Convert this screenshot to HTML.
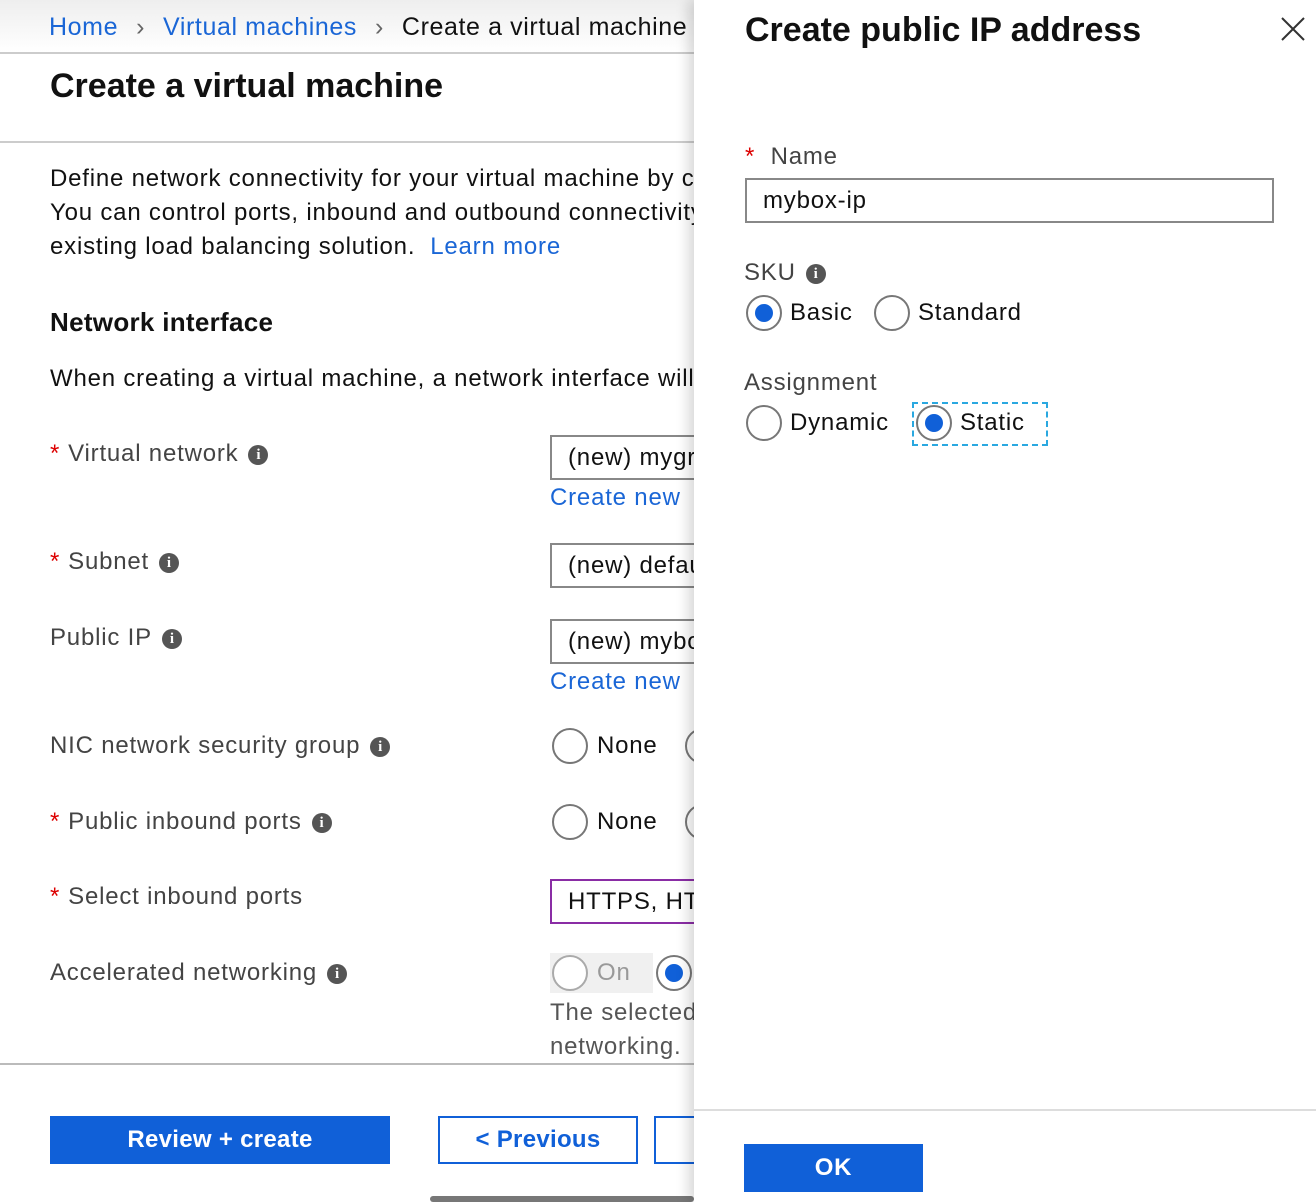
<!DOCTYPE html><html><head><style>
*{margin:0;padding:0;box-sizing:border-box}
body{width:1316px;height:1202px;position:relative;overflow:hidden;background:#fff;font-family:"Liberation Sans",sans-serif;color:#111;font-size:24px;letter-spacing:0.8px}
.a{position:absolute;white-space:nowrap;line-height:34px}
.l{position:absolute;left:0;top:0;width:694px;height:1202px;overflow:hidden}
.blue{color:#1a66d6}
.g{color:#444}
.r{position:absolute;width:36px;height:36px;border:2px solid #777;border-radius:50%;background:#fff}
.r.on::after{content:"";position:absolute;left:7px;top:7px;width:18px;height:18px;border-radius:50%;background:#1060d8}
.i{display:inline-block;width:20px;height:20px;border-radius:50%;background:#555;color:#fff;font-size:15px;font-weight:bold;line-height:20px;text-align:center;vertical-align:middle;margin-left:10px;font-family:"Liberation Serif",serif;letter-spacing:0}
.in{position:absolute;border:2px solid #888;height:45px;padding-left:16px;line-height:41px}
.star{color:#d00;margin-right:8px}
.p{position:absolute;left:694px;top:0;width:622px;height:1202px;background:#fff;box-shadow:-6px 0 12px rgba(0,0,0,.15)}
</style></head><body>
<div class="l">
<div style="position:absolute;left:0;top:0;width:694px;height:52px;background:linear-gradient(#eee,#fff)"></div>
<div class="a" style="left:49px;top:10px;font-size:25px;letter-spacing:0.6px"><span class="blue">Home</span><span style="color:#666;margin:0 18px">›</span><span class="blue">Virtual machines</span><span style="color:#666;margin:0 18px">›</span>Create a virtual machine</div>
<div style="position:absolute;left:0;top:52px;width:694px;height:2px;background:#ccc"></div>
<div class="a" style="left:50px;top:66px;font-size:34px;font-weight:bold;line-height:40px;letter-spacing:0">Create a virtual machine</div>
<div style="position:absolute;left:0;top:141px;width:694px;height:2px;background:#ccc"></div>
<div class="a" style="left:50px;top:162px">Define network connectivity for your virtual machine by configuring</div>
<div class="a" style="left:50px;top:196px">You can control ports, inbound and outbound connectivity with</div>
<div class="a" style="left:50px;top:230px">existing load balancing solution. &nbsp;<span class="blue">Learn more</span></div>
<div class="a" style="left:50px;top:305px;font-weight:bold;font-size:26px;letter-spacing:0.3px">Network interface</div>
<div class="a" style="left:50px;top:362px">When creating a virtual machine, a network interface will be created</div>
<div class="a g" style="left:50px;top:437px"><span class="star">*</span>Virtual network<span class="i">i</span></div>
<div class="in" style="left:550px;top:435px;width:200px">(new) mygroup</div>
<div class="a blue" style="left:550px;top:481px">Create new</div>
<div class="a g" style="left:50px;top:545px"><span class="star">*</span>Subnet<span class="i">i</span></div>
<div class="in" style="left:550px;top:543px;width:200px">(new) default</div>
<div class="a g" style="left:50px;top:621px">Public IP<span class="i">i</span></div>
<div class="in" style="left:550px;top:619px;width:200px">(new) mybox-ip</div>
<div class="a blue" style="left:550px;top:665px">Create new</div>
<div class="a g" style="left:50px;top:729px">NIC network security group<span class="i">i</span></div>
<div class="r" style="left:552px;top:728px"></div><div class="a" style="left:597px;top:729px">None</div><div class="r" style="left:685px;top:728px"></div>
<div class="a g" style="left:50px;top:805px"><span class="star">*</span>Public inbound ports<span class="i">i</span></div>
<div class="r" style="left:552px;top:804px"></div><div class="a" style="left:597px;top:805px">None</div><div class="r" style="left:685px;top:804px"></div>
<div class="a g" style="left:50px;top:880px"><span class="star">*</span>Select inbound ports</div>
<div class="in" style="left:550px;top:879px;width:200px;border-color:#8a2da5">HTTPS, HTTP</div>
<div class="a g" style="left:50px;top:956px">Accelerated networking<span class="i">i</span></div>
<div style="position:absolute;left:550px;top:953px;width:103px;height:40px;background:#f0f0f0"></div>
<div class="r" style="left:552px;top:955px;border-color:#aaa"></div><div class="a" style="left:597px;top:956px;color:#999">On</div>
<div class="r on" style="left:656px;top:955px"></div>
<div class="a" style="left:550px;top:996px;color:#555">The selected VM size does not support accelerated</div>
<div class="a" style="left:550px;top:1030px;color:#555">networking.</div>
<div style="position:absolute;left:0;top:1063px;width:694px;height:2px;background:#bbb"></div>
<div style="position:absolute;left:50px;top:1116px;width:340px;height:48px;background:#1060d8;color:#fff;font-weight:bold;text-align:center;line-height:48px;letter-spacing:0.3px">Review + create</div>
<div style="position:absolute;left:438px;top:1116px;width:200px;height:48px;border:2px solid #1060d8;color:#1060d8;font-weight:bold;text-align:center;line-height:44px;letter-spacing:0.3px">&lt; Previous</div>
<div style="position:absolute;left:654px;top:1116px;width:200px;height:48px;border:2px solid #1060d8"></div>
<div style="position:absolute;left:430px;top:1196px;width:264px;height:6px;background:#777;border-radius:3px"></div>
</div>
<div class="p">
<div class="a" style="left:51px;top:10px;font-size:34px;font-weight:bold;line-height:40px;letter-spacing:0">Create public IP address</div>
<svg style="position:absolute;left:586px;top:16px" width="26" height="26"><path d="M2 2L24 24M24 2L2 24" stroke="#333" stroke-width="2"/></svg>
<div class="a g" style="left:51px;top:140px"><span class="star">*</span> Name</div>
<div class="in" style="left:51px;top:178px;width:529px">mybox-ip</div>
<div class="a g" style="left:50px;top:256px">SKU<span class="i">i</span></div>
<div class="r on" style="left:52px;top:295px"></div><div class="a" style="left:96px;top:296px">Basic</div>
<div class="r" style="left:180px;top:295px"></div><div class="a" style="left:224px;top:296px">Standard</div>
<div class="a g" style="left:50px;top:366px">Assignment</div>
<div class="r" style="left:52px;top:405px"></div><div class="a" style="left:96px;top:406px">Dynamic</div>
<div style="position:absolute;left:218px;top:402px;width:136px;height:44px;border:2px dashed #2aa8e0"></div>
<div class="r on" style="left:222px;top:405px"></div><div class="a" style="left:266px;top:406px">Static</div>
<div style="position:absolute;left:0;top:1109px;width:622px;height:2px;background:#ddd"></div>
<div style="position:absolute;left:50px;top:1144px;width:179px;height:48px;background:#1060d8;color:#fff;font-weight:bold;text-align:center;line-height:48px">OK</div>
</div>
</body></html>
